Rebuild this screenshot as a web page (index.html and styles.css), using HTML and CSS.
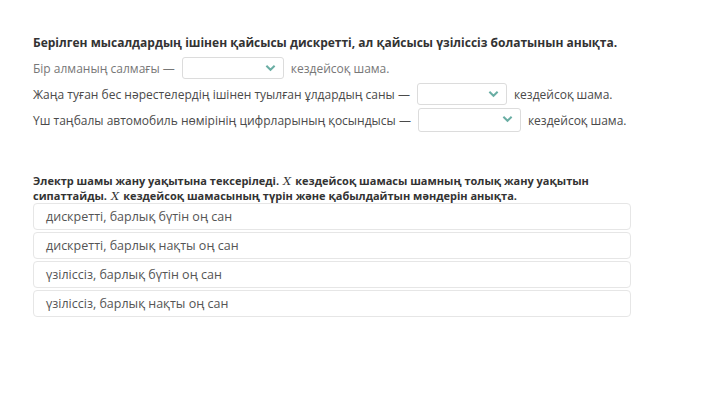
FILE: index.html
```
<!DOCTYPE html>
<html lang="kk">

<head>
    <meta charset="UTF-8">
    <meta name="viewport" content="width=device-width, initial-scale=1.0">
    <title>Кездейсоқ шамалар</title>
    <link rel="stylesheet" href="styles.css">
</head>

<body>
    <div id="content">
        <div class="question">
            <p class="q-title">Берілген мысалдардың ішінен қайсысы дискретті, ал қайсысы үзіліссіз болатынын анықта.</p>
            <div class="row row-faded">
                <span>Бір алманың салмағы —</span>
                <span class="select sel-1"><svg class="chev" viewBox="0 0 12 8"><path d="M1.5 1.5 L6 6 L10.5 1.5" /></svg></span>
                <span>кездейсоқ шама.</span>
            </div>
            <div class="row">
                <span>Жаңа туған бес нәрестелердің ішінен туылған ұлдардың саны —</span>
                <span class="select sel-2"><svg class="chev" viewBox="0 0 12 8"><path d="M1.5 1.5 L6 6 L10.5 1.5" /></svg></span>
                <span>кездейсоқ шама.</span>
            </div>
            <div class="row">
                <span>Үш таңбалы автомобиль нөмірінің цифрларының қосындысы —</span>
                <span class="select sel-3"><svg class="chev" viewBox="0 0 12 8"><path d="M1.5 1.5 L6 6 L10.5 1.5" /></svg></span>
                <span>кездейсоқ шама.</span>
            </div>
        </div>

        <div class="question question-2">
            <p class="q-title q-title-2">Электр шамы жану уақытына тексеріледі.<span class="math">X</span>кездейсоқ шамасы шамның толық жану уақытын сипаттайды.<span class="math">X</span>кездейсоқ шамасының түрін және қабылдайтын мәндерін анықта.</p>
            <div class="options">
                <div class="option">дискретті, барлық бүтін оң сан</div>
                <div class="option">дискретті, барлық нақты оң сан</div>
                <div class="option">үзіліссіз, барлық бүтін оң сан</div>
                <div class="option">үзіліссіз, барлық нақты оң сан</div>
            </div>
        </div>
    </div>
</body>

</html>
```

FILE: styles.css
```
body,
html {
    margin: 0;
    padding: 0;
    background: #fff;
}

#content {
    padding: 35px 0 0 33px;
    width: 598px;
    font-family: "Open Sans", "Noto Sans", sans-serif;
    color: #4a4a4a;
    font-size: 12px;
}

.q-title {
    margin: 0 0 4px 0;
    font-weight: bold;
    color: #333;
    font-size: 12px;
    line-height: 16px;
    white-space: nowrap;
}

.row {
    display: flex;
    align-items: center;
    gap: 7px;
    height: 26px;
    white-space: nowrap;
}

.row-faded {
    color: #777;
}

.select {
    position: relative;
    display: inline-block;
    height: 20px;
    border: 1px solid #dcdcdc;
    border-radius: 3px;
    background: #fff;
}

.sel-1 {
    width: 100px;
}

.sel-2 {
    width: 88px;
}

.sel-3 {
    width: 101px;
    height: 22px;
}

.chev {
    position: absolute;
    right: 7px;
    top: 6px;
    width: 11px;
    height: 8px;
    fill: none;
    stroke: #6aaea4;
    stroke-width: 2.2;
}

.question-2 {
    margin-top: 40px;
}

.q-title-2 {
    font-size: 11px;
    line-height: 15px;
    white-space: normal;
    width: 556px;
    margin-bottom: 0;
}

.math {
    display: inline-block;
    margin: 0 4px;
    font-family: "DejaVu Serif", "Liberation Serif", serif;
    font-style: italic;
    font-weight: normal;
    font-size: 11.5px;
    line-height: 1;
}

.options {
    display: flex;
    flex-direction: column;
    gap: 2px;
}

.option {
    height: 25px;
    line-height: 25px;
    padding-left: 12px;
    border: 1px solid #e6e6e6;
    border-radius: 4px;
    color: #555;
    font-size: 12.5px;
}
```
